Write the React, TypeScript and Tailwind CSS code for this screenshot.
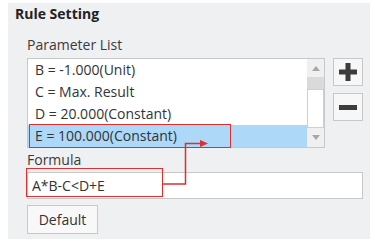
import React from "react";

const font = { fontFamily: '"Open Sans", "Noto Sans", sans-serif' };

export default function App() {
  const rows = [
    "B = -1.000(Unit)",
    "C = Max. Result",
    "D = 20.000(Constant)",
    "E = 100.000(Constant)",
  ];
  return (
    <div className="w-[375px] h-[246px] bg-white overflow-hidden" style={font}>
      <div className="relative ml-[8px] mt-[3px] w-[362px] h-[236px] bg-[#eff0f1] flex flex-col">
        <div className="pl-[7px] pt-[1px] h-[22px] text-[14px] leading-[20px] font-bold text-[#222]">
          Rule Setting
        </div>
        <div className="pl-[19px] mt-[10px] h-[20px] text-[14px] leading-[20px] text-[#3a3a3a]">
          Parameter List
        </div>
        <div className="flex pl-[19px] mt-[3px] gap-[8px]">
          <div className="w-[298px] h-[90px] border border-[#c8c8c8] bg-white flex">
            <div className="flex-1 flex flex-col">
              {rows.map((r, i) => (
                <div
                  key={r}
                  className={
                    "h-[22px] pl-[7px] text-[14px] leading-[22px] text-[#333] " +
                    (i === 3 ? "bg-[#add8f7] relative" : "")
                  }
                >
                  {r}
                  {i === 3 && (
                    <div className="absolute left-[1px] top-[-1px] w-[202px] h-[24px] border-[1.5px] border-[#e02d2d]" />
                  )}
                </div>
              ))}
            </div>
            <div className="w-[17px] flex flex-col bg-[#f0f0f0]">
              <div className="h-[18px] flex items-center justify-center">
                <svg width="8" height="5" viewBox="0 0 8 5">
                  <path d="M0 5 L4 0 L8 5 Z" fill="#a6a6a6" />
                </svg>
              </div>
              <div className="h-[12px] bg-[#dadada]" />
              <div className="h-[39px] bg-white border border-[#cfcfcf]" />
              <div className="flex-1 flex items-center justify-center">
                <svg width="8" height="5" viewBox="0 0 8 5">
                  <path d="M0 0 L8 0 L4 5 Z" fill="#a6a6a6" />
                </svg>
              </div>
            </div>
          </div>
          <div className="flex flex-col gap-[7px]">
            <div className="w-[30px] h-[28px] border border-[#c8c8c8] bg-[#f7f7f7] flex items-center justify-center">
              <svg width="18" height="18" viewBox="0 0 18 18">
                <path d="M6.5 0 H11.5 V6.5 H18 V11.5 H11.5 V18 H6.5 V11.5 H0 V6.5 H6.5 Z" fill="#3c3c3c" />
              </svg>
            </div>
            <div className="w-[30px] h-[28px] border border-[#c8c8c8] bg-[#f7f7f7] flex items-center justify-center">
              <svg width="18" height="5" viewBox="0 0 18 5">
                <rect x="0" y="0" width="18" height="5" fill="#3c3c3c" />
              </svg>
            </div>
          </div>
        </div>
        <div className="pl-[19px] mt-[2px] h-[20px] text-[14px] leading-[20px] text-[#3a3a3a]">
          Formula
        </div>
        <div className="pl-[19px] mt-[2px]">
          <div className="w-[336px] h-[27px] border border-[#c8c8c8] bg-white pl-[4px] text-[14px] leading-[25px] text-[#333]">
            A*B-C&lt;D+E
          </div>
        </div>
        <div className="pl-[19px] mt-[6px]">
          <button className="w-[71px] h-[29px] border border-[#c8c8c8] bg-[#f8f8f8] text-[14px] text-[#333]">
            Default
          </button>
        </div>
        <div className="absolute left-[18px] top-[165px] w-[137px] h-[29px] border-[1.5px] border-[#e02d2d]" />
        <svg
          className="absolute left-0 top-0 pointer-events-none"
          width="362"
          height="236"
          viewBox="0 0 362 236"
        >
          <path d="M155 181 H177.5 V140.5 H193" fill="none" stroke="#e02d2d" strokeWidth="1.5" />
          <path d="M192 137 L200 140.5 L192 144 Z" fill="#e02d2d" />
        </svg>
      </div>
    </div>
  );
}
